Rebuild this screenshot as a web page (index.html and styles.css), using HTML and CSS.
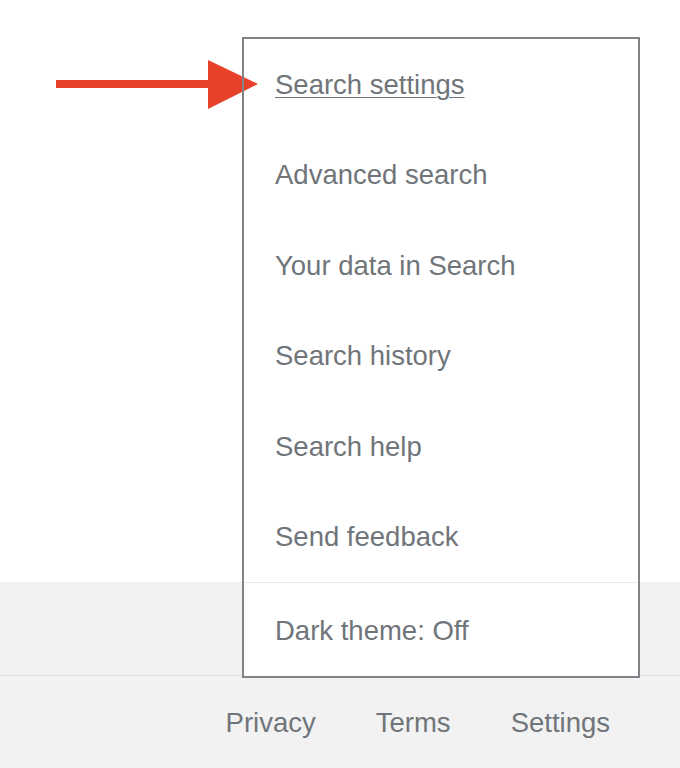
FILE: index.html
```html
<!DOCTYPE html>
<html lang="en">
<head>
<meta charset="utf-8">
<title>Search settings menu</title>
<link rel="stylesheet" href="styles.css">
</head>
<body>
<div class="page">
  <div class="content"></div>
  <div class="band"></div>
  <footer class="footer">
    <a class="footer-link" href="#">Privacy</a>
    <a class="footer-link" href="#">Terms</a>
    <a class="footer-link" href="#">Settings</a>
  </footer>

  <div class="menu">
    <div class="menu-group">
      <a class="menu-item active" href="#">Search settings</a>
      <a class="menu-item" href="#">Advanced search</a>
      <a class="menu-item" href="#">Your data in Search</a>
      <a class="menu-item" href="#">Search history</a>
      <a class="menu-item" href="#">Search help</a>
      <a class="menu-item" href="#">Send feedback</a>
    </div>
    <div class="menu-group menu-group-last">
      <a class="menu-item" href="#">Dark theme: Off</a>
    </div>
  </div>

  <svg class="arrow" width="260" height="60" viewBox="0 0 260 60" aria-hidden="true">
    <rect x="0" y="20" width="156" height="8" fill="#e8412a"/>
    <polygon points="152,0 202,24 152,49" fill="#e8412a"/>
    <rect x="186" y="0" width="2" height="60" fill="#808489"/>
  </svg>
</div>
</body>
</html>
```

FILE: styles.css
```css
html, body {
  margin: 0;
  padding: 0;
}

body {
  font-family: Arial, "Liberation Sans", Helvetica, sans-serif;
  background: #ffffff;
  color: #70757a;
}

.page {
  position: relative;
  width: 680px;
  height: 768px;
  overflow: hidden;
  display: flex;
  flex-direction: column;
}

.content {
  height: 582px;
  background: #ffffff;
}

.band {
  height: 93px;
  background: #f2f2f2;
  border-bottom: 1px solid #dadce0;
}

.footer {
  flex: 1;
  background: #f2f2f2;
  display: flex;
  justify-content: flex-end;
  align-items: center;
  padding-right: 40px;
  padding-top: 2px;
}

.footer-link {
  font-size: 27.5px;
  color: #70757a;
  text-decoration: none;
  padding: 0 30px;
}

.menu {
  position: absolute;
  left: 242px;
  top: 37px;
  width: 394px;
  border: 2px solid #808489;
  background: #ffffff;
}

.menu-group {
  display: flex;
  flex-direction: column;
}

.menu-group-last {
  border-top: 1px solid #ebebeb;
}

.menu-item {
  display: flex;
  align-items: center;
  height: 90.5px;
  padding-left: 31px;
  padding-top: 1px;
  box-sizing: border-box;
  font-size: 27.5px;
  color: #70757a;
  text-decoration: none;
}

.menu-group-last .menu-item {
  height: 93px;
  padding-top: 2px;
}

.menu-item.active {
  text-decoration: underline;
  text-underline-offset: 3px;
  text-decoration-thickness: 1px;
}

.arrow {
  position: absolute;
  left: 56px;
  top: 60px;
}
```
